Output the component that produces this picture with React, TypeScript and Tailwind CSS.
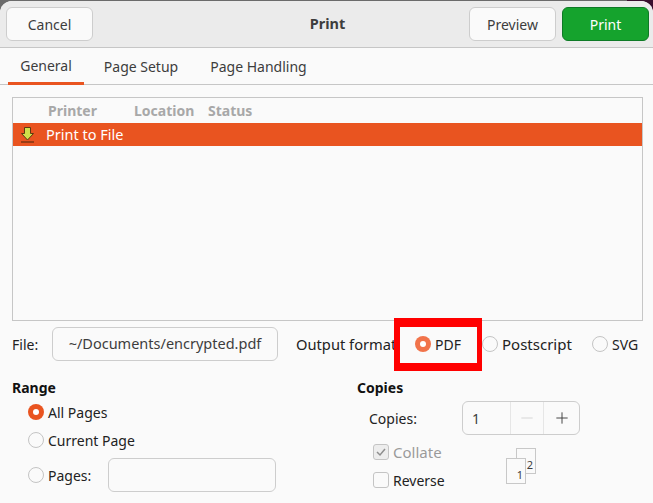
import { Minus, Plus } from 'lucide-react';

const font = { fontFamily: '"Noto Sans", sans-serif' };

const Radio = ({ checked, faded }: { checked?: boolean; faded?: boolean }) =>
  checked ? (
    <span className={`flex h-4 w-4 shrink-0 items-center justify-center rounded-full ${faded ? 'bg-[#f1734a]' : 'bg-[#e95420]'}`}>
      <span className="h-1.5 w-1.5 rounded-full bg-white" />
    </span>
  ) : (
    <span className="h-4 w-4 shrink-0 rounded-full border border-[#c4c4c4] bg-[#fafafa]" />
  );

const PrinterIcon = () => (
  <svg width="14" height="16" viewBox="0 0 14 16" className="shrink-0">
    <path d="M3.500 .5h6v6h3L6.500 13 .5 6.500h3z" fill="#cfe04a" stroke="#5c3a10" />
    <path d="M0 15h13" stroke="#4a2408" strokeWidth="1.200" />
  </svg>
);

const Sheet = ({ n, className }: { n: string; className: string }) => (
  <div className={`flex h-[26px] w-5 items-end justify-end border border-[#c8c8c8] bg-[#fafafa] pb-[3px] pr-[2px] text-[11px] leading-none text-[#3d3d3d] ${className}`}>
    {n}
  </div>
);

export default function App() {
  return (
    <div className="relative h-[503px] w-[653px] overflow-hidden bg-[linear-gradient(to_right,#6b6b6b_96%,#3a0f2e_96%)] text-[14px] text-[#333]" style={font}>
      <div className="mt-px h-[502px] w-full overflow-hidden rounded-t-[12px] bg-[#fafafa]">
        {/* header */}
        <div className="grid h-[47px] grid-cols-[1fr_auto_1fr] items-center border-b border-[#c6c6c6] bg-[#ebebeb] pl-1.5 pr-1">
          <button className="h-[34px] w-[87px] rounded-[6px] border border-[#cdcdcd] bg-[#fafafa] text-[#3d3d3d]">Cancel</button>
          <span className="text-[14.5px] font-bold text-[#3d3d3d]">Print</span>
          <div className="flex justify-end gap-[6px]">
            <button className="h-[34px] w-[87px] rounded-[6px] border border-[#cdcdcd] bg-[#fafafa] text-[#3d3d3d]">Preview</button>
            <button className="h-[34px] w-[87px] rounded-[6px] border border-[#0e7a26] bg-[#15a32d] text-white">Print</button>
          </div>
        </div>

        {/* tabs */}
        <div className="flex h-[37px] border-b border-[#c6c6c6] pl-2">
          <div className="-mb-px flex w-[76px] items-center justify-center border-b-[3px] border-[#e95420] text-[#3d3d3d]">General</div>
          <div className="flex w-[114px] items-center justify-center text-[#3d3d3d]">Page Setup</div>
          <div className="flex w-[121px] items-center justify-center text-[#3d3d3d]">Page Handling</div>
        </div>

        {/* printer list */}
        <div className="ml-3 mt-3 h-[224px] w-[631px] border border-[#c6c6c6]">
          <div className="flex h-[25px] items-center pl-[35px] font-bold text-[#a8a8a8]">
            <span className="w-[86px]">Printer</span>
            <span className="w-[74px]">Location</span>
            <span>Status</span>
          </div>
          <div className="flex h-[23px] items-center bg-[#e95420] pl-2 text-white">
            <PrinterIcon />
            <span className="ml-[11px] text-[14.5px]">Print to File</span>
          </div>
        </div>

        {/* file + format */}
        <div className="ml-3 mt-[6px] flex h-[34px] items-center text-[#222]">
          <span className="w-10">File:</span>
          <div className="flex h-[34px] w-[226px] items-center justify-center rounded-[6px] border border-[#cdcdcd] text-[14.500px] text-[#3d3d3d]">~/Documents/encrypted.pdf</div>
          <span className="ml-[18px] w-[101px] whitespace-nowrap text-[14.700px]">Output format</span>
          <div className="ml-[18px] flex w-[67px] items-center gap-[4px]"><Radio checked faded /><span>PDF</span></div>
          <div className="flex w-[110px] items-center gap-[4px]"><Radio /><span className="text-[15px]">Postscript</span></div>
          <div className="flex items-center gap-[4px]"><Radio /><span>SVG</span></div>
        </div>

        {/* range + copies */}
        <div className="ml-3 mt-[17px] flex text-[#222]">
          <div className="w-[345px]">
            <div className="font-bold leading-[20px] text-[#111]">Range</div>
            <div className="ml-4 mt-1 flex h-5 items-center gap-1"><Radio checked /><span>All Pages</span></div>
            <div className="ml-4 mt-2 flex h-5 items-center gap-1"><Radio /><span>Current Page</span></div>
            <div className="ml-4 mt-2 flex h-[34px] items-center">
              <Radio />
              <span className="ml-1 w-[60px]">Pages:</span>
              <div className="h-[34px] w-[168px] rounded-[6px] border border-[#cdcdcd]" />
            </div>
          </div>
          <div>
            <div className="font-bold leading-[20px] text-[#111]">Copies</div>
            <div className="ml-3 mt-[3px] flex h-[34px] items-center">
              <span className="w-[93px]">Copies:</span>
              <div className="flex h-[34px] w-[118px] items-center rounded-[6px] border border-[#cdcdcd]">
                <span className="w-[47px] pl-[9px] text-[#3d3d3d]">1</span>
                <span className="flex h-full w-[35px] items-center justify-center border-x border-[#e6e6e6] text-[#d4d4d4]"><Minus size={18} strokeWidth={1.25} /></span>
                <span className="flex w-[35px] items-center justify-center text-[#3d3d3d]"><Plus size={18} strokeWidth={1.25} /></span>
              </div>
            </div>
            <div className="ml-4 mt-[7px] flex">
              <div className="w-[133px]">
                <div className="flex h-5 items-center gap-1 text-[15px] text-[#9a9a9a]">
                  <span className="flex h-4 w-4 items-center justify-center rounded-[3px] border border-[#c4c4c4] bg-[#ededed]">
                    <svg width="12" height="12" viewBox="0 0 12 12"><path d="M2 6l3 3 5-6" fill="none" stroke="#8e8e8e" strokeWidth="1.500" /></svg>
                  </span>
                  Collate
                </div>
                <div className="mt-2 flex h-5 items-center gap-1">
                  <span className="h-4 w-4 rounded-[3px] border border-[#c4c4c4] bg-[#fafafa]" />
                  Reverse
                </div>
              </div>
              <div className="relative mt-[6px] h-[36px] w-[30px]">
                <Sheet n="2" className="absolute left-[10px] top-0" />
                <Sheet n="1" className="absolute left-0 top-[10px]" />
              </div>
            </div>
          </div>
        </div>
      </div>

      {/* annotation box drawn over the screenshot */}
      <div className="absolute left-[394px] top-[318px] h-[53px] w-[88px] border-b-[8px] border-l-[6px] border-r-[5px] border-t-[9px] border-[#ff0000]" />
    </div>
  );
}
